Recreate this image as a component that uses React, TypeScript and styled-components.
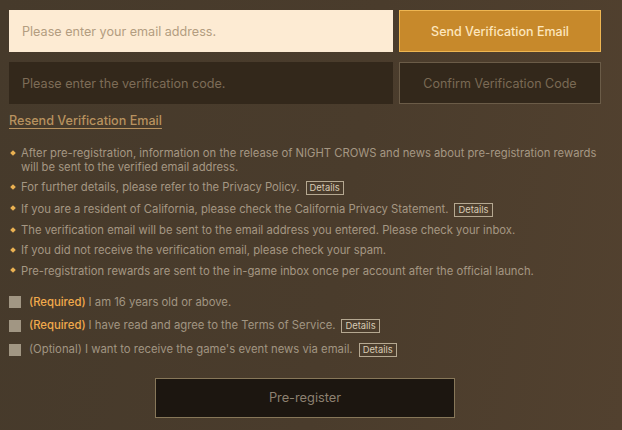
import React from "react";
import styled, { createGlobalStyle } from "styled-components";

const GlobalStyle = createGlobalStyle`
    * {
        box-sizing: border-box;
    }

    body {
        margin: 0;
        background: linear-gradient(100deg, #463a2b 0%, #4a3c2c 55%, #52412f 100%);
        font-family: Inter, "Noto Sans", sans-serif;
        min-height: 100vh;
    }
`;

export const Container = styled.div`
    width: 622px;
    height: 430px;
    padding: 10px 19px 0 9px;
    display: flex;
    flex-direction: column;
`;

export const FieldRow = styled.div`
    display: grid;
    grid-template-columns: 384px 202px;
    gap: 6px;
    height: 42px;
    margin-bottom: 10px;
`;

export const Input = styled.input<{ $light?: boolean }>`
    width: 100%;
    height: 100%;
    border: none;
    outline: none;
    padding: 0 13px;
    font-family: Inter, "Noto Sans", sans-serif;
    font-size: 12.6px;
    background-color: ${({ $light }) => ($light ? "#fdebd3" : "#33281b")};
    color: #4a3c2c;

    &::placeholder {
        color: ${({ $light }) => ($light ? "#b39d80" : "#7d6c57")};
    }
`;

export const ActionButton = styled.button<{ $primary?: boolean }>`
    width: 100%;
    height: 100%;
    font-family: Inter, "Noto Sans", sans-serif;
    font-size: 12.5px;
    font-weight: ${({ $primary }) => ($primary ? 500 : 400)};
    background-color: ${({ $primary }) => ($primary ? "#c7892b" : "#33281b")};
    border: 1px solid ${({ $primary }) => ($primary ? "#eeb652" : "#6b5c48")};
    color: ${({ $primary }) => ($primary ? "#fde6bd" : "#7a6a55")};
    cursor: pointer;
`;

export const ResendLink = styled.a`
    align-self: flex-start;
    margin-top: -2px;
    font-size: 12.6px;
    font-weight: 500;
    line-height: 18px;
    color: #b8925f;
    text-decoration: underline;
    text-underline-offset: 3px;
    cursor: pointer;
`;

export const NoticeList = styled.ul`
    list-style: none;
    margin: 16px 0 0 0;
    padding: 0;
    display: flex;
    flex-direction: column;
    gap: 6.4px;
`;

export const Notice = styled.li`
    position: relative;
    padding-left: 12px;
    font-size: 11.25px;
    line-height: 14px;
    color: #a59783;

    &::before {
        content: "";
        position: absolute;
        left: 2px;
        top: 4.5px;
        width: 4px;
        height: 4px;
        background-color: #eab152;
        transform: rotate(45deg);
    }
`;

export const DetailsTag = styled.span`
    display: inline-block;
    margin-left: 6px;
    padding: 0 3px;
    height: 14px;
    line-height: 12px;
    font-size: 9.4px;
    color: #d8cbb4;
    border: 1px solid #b5a891;
    vertical-align: middle;
`;

export const AgreeList = styled.div`
    margin-top: 17px;
    display: flex;
    flex-direction: column;
    gap: 10px;
`;

export const AgreeRow = styled.label`
    display: flex;
    align-items: center;
    gap: 8px;
    height: 14px;
    font-size: 11.3px;
    color: #a19582;
    cursor: pointer;
`;

export const Box = styled.span`
    width: 12px;
    height: 12px;
    background-color: #a19683;
    flex-shrink: 0;
`;

export const Required = styled.span`
    color: #f2aa4c;
    font-weight: 500;
    margin-right: 3px;
`;

export const SubmitButton = styled.button`
    align-self: flex-start;
    margin-top: 21px;
    margin-left: 146px;
    width: 300px;
    height: 40px;
    background-color: #1c1610;
    border: 1px solid #877759;
    color: #8d8170;
    font-family: Inter, "Noto Sans", sans-serif;
    font-size: 12.8px;
    cursor: pointer;
`;

const notices: { text: string; details?: boolean }[] = [
    {
        text: "After pre-registration, information on the release of NIGHT CROWS and news about pre-registration rewards will be sent to the verified email address.",
    },
    { text: "For further details, please refer to the Privacy Policy.", details: true },
    { text: "If you are a resident of California, please check the California Privacy Statement.", details: true },
    { text: "The verification email will be sent to the email address you entered. Please check your inbox." },
    { text: "If you did not receive the verification email, please check your spam." },
    { text: "Pre-registration rewards are sent to the in-game inbox once per account after the official launch." },
];

const agreements: { label: string; text: string; required: boolean; details?: boolean }[] = [
    { label: "(Required)", text: "I am 16 years old or above.", required: true },
    { label: "(Required)", text: "I have read and agree to the Terms of Service.", required: true, details: true },
    { label: "(Optional)", text: "I want to receive the game's event news via email.", required: false, details: true },
];

export default function App() {
    return (
        <>
            <GlobalStyle />
            <Container>
                <FieldRow>
                    <Input $light placeholder="Please enter your email address." />
                    <ActionButton $primary>Send Verification Email</ActionButton>
                </FieldRow>
                <FieldRow>
                    <Input placeholder="Please enter the verification code." />
                    <ActionButton>Confirm Verification Code</ActionButton>
                </FieldRow>
                <ResendLink>Resend Verification Email</ResendLink>

                <NoticeList>
                    {notices.map((n) => (
                        <Notice key={n.text}>
                            {n.text}
                            {n.details && <DetailsTag>Details</DetailsTag>}
                        </Notice>
                    ))}
                </NoticeList>

                <AgreeList>
                    {agreements.map((a) => (
                        <AgreeRow key={a.text}>
                            <Box />
                            <span>
                                {a.required ? <Required>{a.label}</Required> : `${a.label} `}
                                {a.text}
                                {a.details && <DetailsTag>Details</DetailsTag>}
                            </span>
                        </AgreeRow>
                    ))}
                </AgreeList>

                <SubmitButton>Pre-register</SubmitButton>
            </Container>
        </>
    );
}
